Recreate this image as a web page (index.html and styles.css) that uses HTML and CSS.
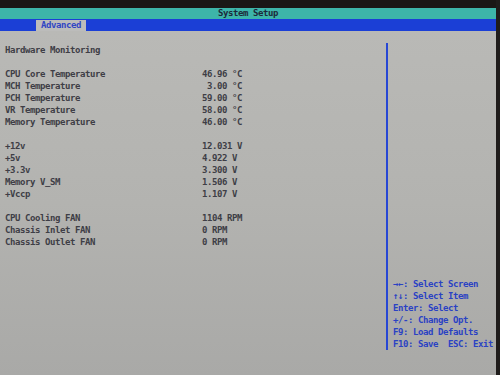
FILE: index.html
```html
<!DOCTYPE html>
<html>
<head>
<meta charset="utf-8">
<link rel="stylesheet" href="styles.css">
</head>
<body>
<div class="monitor">
  <div class="screen">
    <div class="bezel-top"></div>
    <div class="titlebar">System Setup</div>
    <div class="menubar"><span class="tab">Advanced</span></div>
    <div class="main">
      <div class="left">
        <div class="row heading">Hardware Monitoring</div>
        <div class="row blank"></div>
        <div class="row"><span class="lbl">CPU Core Temperature</span><span class="val">46.96 °C</span></div>
        <div class="row"><span class="lbl">MCH Temperature</span><span class="val"> 3.00 °C</span></div>
        <div class="row"><span class="lbl">PCH Temperature</span><span class="val">59.00 °C</span></div>
        <div class="row"><span class="lbl">VR Temperature</span><span class="val">58.00 °C</span></div>
        <div class="row"><span class="lbl">Memory Temperature</span><span class="val">46.00 °C</span></div>
        <div class="row blank"></div>
        <div class="row"><span class="lbl">+12v</span><span class="val">12.031 V</span></div>
        <div class="row"><span class="lbl">+5v</span><span class="val">4.922 V</span></div>
        <div class="row"><span class="lbl">+3.3v</span><span class="val">3.300 V</span></div>
        <div class="row"><span class="lbl">Memory V_SM</span><span class="val">1.506 V</span></div>
        <div class="row"><span class="lbl">+Vccp</span><span class="val">1.107 V</span></div>
        <div class="row blank"></div>
        <div class="row"><span class="lbl">CPU Cooling FAN</span><span class="val">1104 RPM</span></div>
        <div class="row"><span class="lbl">Chassis Inlet FAN</span><span class="val">0 RPM</span></div>
        <div class="row"><span class="lbl">Chassis Outlet FAN</span><span class="val">0 RPM</span></div>
      </div>
      <div class="right">
        <div class="help">
          <div class="hrow">→←: Select Screen</div>
          <div class="hrow">↑↓: Select Item</div>
          <div class="hrow">Enter: Select</div>
          <div class="hrow">+/-: Change Opt.</div>
          <div class="hrow">F9: Load Defaults</div>
          <div class="hrow">F10: Save  ESC: Exit</div>
        </div>
      </div>
    </div>
  </div>
  <div class="bezel-right"></div>
</div>
</body>
</html>
```
FILE: styles.css
```css
html, body {
  margin: 0;
  padding: 0;
  background: #1a1716;
}
.monitor {
  width: 500px;
  height: 375px;
  display: flex;
  overflow: hidden;
}
.screen {
  width: 496px;
  height: 375px;
  display: flex;
  flex-direction: column;
  font-family: "DejaVu Sans Mono", "Liberation Mono", monospace;
  font-weight: bold;
  font-size: 9px;
  letter-spacing: -0.42px;
}
.bezel-right {
  width: 4px;
  height: 375px;
  background: #1f1c1b;
}
.bezel-top {
  height: 8px;
  background: #1a1716;
}
.titlebar {
  height: 11px;
  line-height: 11px;
  background: #3db5a9;
  color: #1c2a3a;
  text-align: center;
}
.menubar {
  height: 12px;
  background: #1b3fd6;
  display: flex;
  padding-left: 36px;
}
.tab {
  width: 50px;
  height: 11px;
  margin-top: 1px;
  line-height: 11px;
  background: #bcbcbb;
  color: #3146c4;
  text-align: center;
}
.main {
  flex: 1;
  display: flex;
  background: linear-gradient(180deg, #b9b9b6 0%, #b3b3b0 50%, #a9a9a7 100%);
  padding-top: 12px;
  padding-bottom: 25px;
}
.left {
  width: 386px;
  padding-top: 1px;
}
.row {
  height: 12px;
  line-height: 12px;
  display: grid;
  grid-template-columns: 197px auto;
  padding-left: 5px;
  color: #3e3e46;
  white-space: pre;
}
.right {
  flex: 1;
  border-left: 2px solid #2747d4;
  display: flex;
  flex-direction: column;
  justify-content: flex-end;
}
.help {
  padding-left: 5px;
}
.hrow {
  height: 12px;
  line-height: 12px;
  color: #2a42c4;
  white-space: pre;
}
```
